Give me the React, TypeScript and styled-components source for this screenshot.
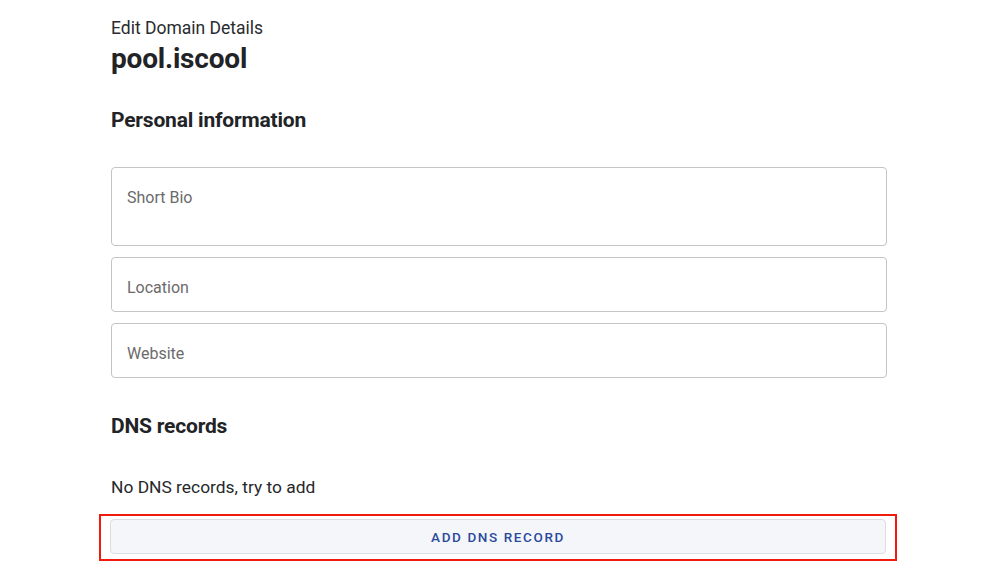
import styled, { createGlobalStyle } from 'styled-components'

const GlobalStyle = createGlobalStyle`
  html, body {
    margin: 0;
    padding: 0;
    background: #fff;
    font-family: Roboto, 'Liberation Sans', sans-serif;
    color: #222326;
  }
`

const Page = styled.main`
  width: 776px;
  margin-left: 111px;
  padding-top: 18px;
`

const Overline = styled.div`
  font-size: 17.5px;
  line-height: 20px;
  color: #2a2b2e;
`

const Title = styled.h1`
  margin: 4px 0 0;
  font-size: 28px;
  line-height: 34px;
  font-weight: 700;
  letter-spacing: -0.2px;
`

const SectionTitle = styled.h2<{ $top: number }>`
  margin: ${(p) => p.$top}px 0 0;
  font-size: 21px;
  line-height: 24px;
  font-weight: 700;
  letter-spacing: -0.2px;
`

const Fields = styled.div`
  margin-top: 35px;
  display: flex;
  flex-direction: column;
  gap: 11px;
`

const Field = styled.div<{ $tall?: boolean }>`
  box-sizing: border-box;
  height: ${(p) => (p.$tall ? 79 : 55)}px;
  border: 1px solid #c4c4c4;
  border-radius: 4px;
  padding: 20px 15px 0;
  font-size: 16px;
  line-height: 20px;
  color: #6b6b6b;
`

const EmptyText = styled.p`
  margin: 39px 0 0;
  font-size: 17.4px;
  line-height: 20px;
  color: #26272a;
`

const Highlight = styled.div`
  margin: 17px 0 0 -12px;
  width: 798px;
  box-sizing: border-box;
  border: 2px solid #f01a0f;
  padding: 3px 9px 5px;
`

const AddButton = styled.button`
  display: block;
  width: 100%;
  height: 35px;
  border: 1px solid #dcdde3;
  border-radius: 4px;
  background: #f5f6fa;
  color: #2b4a9c;
  font-family: Roboto, 'Liberation Sans', sans-serif;
  font-size: 13.5px;
  font-weight: 500;
  letter-spacing: 1.6px;
  cursor: pointer;
`

const App = () => {
  return (
    <>
      <GlobalStyle />
      <Page>
        <Overline>Edit Domain Details</Overline>
        <Title>pool.iscool</Title>
        <SectionTitle $top={32}>Personal information</SectionTitle>
        <Fields>
          <Field $tall>Short Bio</Field>
          <Field>Location</Field>
          <Field>Website</Field>
        </Fields>
        <SectionTitle $top={36}>DNS records</SectionTitle>
        <EmptyText>No DNS records, try to add</EmptyText>
        <Highlight>
          <AddButton type='button'>ADD DNS RECORD</AddButton>
        </Highlight>
      </Page>
    </>
  )
}

export default App
